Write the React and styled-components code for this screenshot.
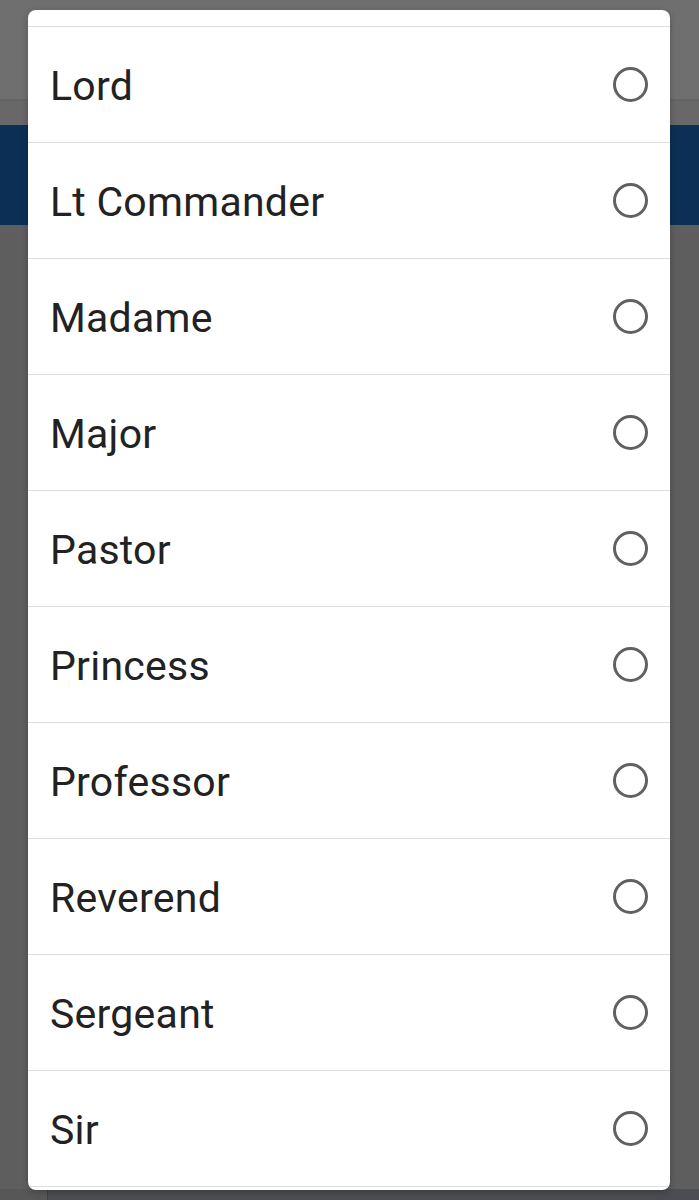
import React from 'react';
import styled, { createGlobalStyle } from 'styled-components';

const GlobalStyle = createGlobalStyle`
  html, body {
    margin: 0;
    padding: 0;
    background: #5e5e5e;
  }
  body {
    font-family: Roboto, "Liberation Sans", Arial, sans-serif;
  }
`;

const Screen = styled.div`
  position: relative;
  width: 699px;
  height: 1200px;
  overflow: hidden;
  display: flex;
  flex-direction: column;
  background: #5e5e5e;
`;

const TopBar = styled.div`
  height: 99px;
  background: #6f6f6f;
  border-bottom: 2px solid #646464;
`;

const SubBar = styled.div`
  height: 24px;
  background: #686868;
`;

const BlueBand = styled.div`
  height: 100px;
  background: #0c3055;
`;

const Body = styled.div`
  flex: 1;
  background: #5e5e5e;
`;

const Footer = styled.div`
  height: 11px;
  display: flex;
`;

const FooterSide = styled.div`
  width: 47px;
  background: #575757;
  border-right: 1px solid #3f4045;
`;

const FooterMain = styled.div`
  flex: 1;
  background: #4b4d52;
`;

const Dialog = styled.div`
  position: absolute;
  left: 28px;
  top: 10px;
  width: 642px;
  height: 1180px;
  background: #ffffff;
  border-radius: 8px;
  overflow: hidden;
  padding-top: 16px;
  box-sizing: border-box;
  box-shadow: 0 2px 6px rgba(0, 0, 0, 0.25);
`;

const List = styled.ul`
  list-style: none;
  margin: 0;
  padding: 0;
  border-bottom: 1px solid #dedede;
`;

const Row = styled.li`
  height: 115px;
  border-top: 1px solid #dedede;
  display: flex;
  align-items: center;
  justify-content: space-between;
  padding: 0 22px 0 22px;
`;

const Label = styled.span`
  font-size: 41px;
  line-height: 1;
  padding-top: 3px;
  letter-spacing: 0.25px;
  color: #222222;
`;

const Radio = styled.span`
  width: 29px;
  height: 29px;
  border: 3px solid #616161;
  border-radius: 50%;
  flex-shrink: 0;
`;

const titles = [
  'Lord',
  'Lt Commander',
  'Madame',
  'Major',
  'Pastor',
  'Princess',
  'Professor',
  'Reverend',
  'Sergeant',
  'Sir',
];

const App = () => {
  return (
    <>
      <GlobalStyle />
      <Screen>
        <TopBar />
        <SubBar />
        <BlueBand />
        <Body />
        <Footer>
          <FooterSide />
          <FooterMain />
        </Footer>
        <Dialog>
          <List>
            {titles.map((t) => (
              <Row key={t}>
                <Label>{t}</Label>
                <Radio />
              </Row>
            ))}
          </List>
        </Dialog>
      </Screen>
    </>
  );
};

export default App;
